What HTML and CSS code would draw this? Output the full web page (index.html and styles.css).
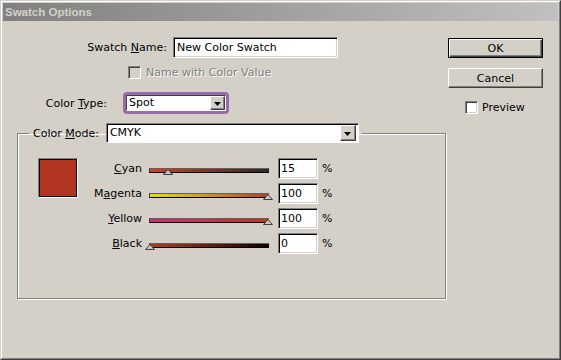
FILE: index.html
```html
<!DOCTYPE html>
<html>
<head>
<meta charset="utf-8">
<link rel="stylesheet" href="styles.css">
</head>
<body>
<div class="window">
  <div class="frame">
    <div class="titlebar">Swatch Options</div>
    <div class="content">
      <div class="form">
        <div class="row row-name">
          <label class="lbl lbl-name">Swatch <u>N</u>ame:</label>
          <div class="field name-field">New Color Swatch</div>
        </div>
        <div class="row row-check">
          <span class="check check-disabled"></span>
          <span class="disabled-text">Name with Color Value</span>
        </div>
        <div class="row row-type">
          <label class="lbl lbl-type">Color <u>T</u>ype:</label>
          <div class="focus-ring">
            <div class="select select-type">
              <span class="select-text">Spot</span>
              <span class="drop-btn"><svg width="7" height="4" viewBox="0 0 7 4"><polygon points="0,0 7,0 3.5,4" fill="#000"/></svg></span>
            </div>
          </div>
        </div>
        <fieldset class="group">
          <legend class="legend">
            <span class="legend-label">Color <u>M</u>ode:</span>
            <div class="select select-mode">
              <span class="select-text">CMYK</span>
              <span class="drop-btn"><svg width="7" height="4" viewBox="0 0 7 4"><polygon points="0,0 7,0 3.5,4" fill="#000"/></svg></span>
            </div>
          </legend>
          <div class="group-body">
            <div class="swatch"></div>
            <div class="sliders">
              <span class="slabel"><u>C</u>yan</span>
              <div class="slider"><div class="track track-cyan"></div><svg class="thumb" style="--v:15" width="10" height="6" viewBox="0 0 10 6"><polygon points="0.5,5.5 5,0.5 9.5,5.5" fill="#c8c8c8" stroke="#404040"/></svg></div>
              <div class="field num">15</div>
              <span class="pct">%</span>

              <span class="slabel">M<u>a</u>genta</span>
              <div class="slider"><div class="track track-magenta"></div><svg class="thumb" style="--v:100" width="10" height="6" viewBox="0 0 10 6"><polygon points="0.5,5.5 5,0.5 9.5,5.5" fill="#c8c8c8" stroke="#404040"/></svg></div>
              <div class="field num">100</div>
              <span class="pct">%</span>

              <span class="slabel"><u>Y</u>ellow</span>
              <div class="slider"><div class="track track-yellow"></div><svg class="thumb" style="--v:100" width="10" height="6" viewBox="0 0 10 6"><polygon points="0.5,5.5 5,0.5 9.5,5.5" fill="#c8c8c8" stroke="#404040"/></svg></div>
              <div class="field num">100</div>
              <span class="pct">%</span>

              <span class="slabel"><u>B</u>lack</span>
              <div class="slider"><div class="track track-black"></div><svg class="thumb" style="--v:0" width="10" height="6" viewBox="0 0 10 6"><polygon points="0.5,5.5 5,0.5 9.5,5.5" fill="#c8c8c8" stroke="#404040"/></svg></div>
              <div class="field num">0</div>
              <span class="pct">%</span>
            </div>
          </div>
        </fieldset>
      </div>
      <div class="actions">
        <div class="btn btn-default"><span>OK</span></div>
        <div class="btn"><span>Cancel</span></div>
        <div class="preview">
          <span class="check"></span>
          <span class="preview-label">Preview</span>
        </div>
      </div>
    </div>
  </div>
</div>
</body>
</html>
```
FILE: styles.css
```css
* { box-sizing: border-box; }
html, body { margin: 0; padding: 0; }
body {
  background: #d4d0c8;
  font-family: "DejaVu Sans", sans-serif;
  font-size: 11px;
  color: #000;
}
u { text-decoration: underline; text-underline-offset: 1px; }

.window {
  width: 561px;
  height: 360px;
  border: 1px solid;
  border-color: #d4d0c8 #404040 #404040 #d4d0c8;
  background: #d4d0c8;
}
.frame {
  height: 100%;
  border: 1px solid;
  border-color: #ffffff #808080 #808080 #ffffff;
  padding: 1px;
}
.titlebar {
  height: 18px;
  background: linear-gradient(to right, #808080, #c0c0c0);
  color: #d4d0c8;
  font-family: "Liberation Sans", Arial, sans-serif;
  font-weight: bold;
  font-size: 11.5px;
  line-height: 18px;
  padding-left: 2px;
}

.content {
  display: flex;
}
.form {
  width: 445px;
}
.row {
  display: flex;
  align-items: center;
}
.lbl { text-align: right; white-space: nowrap; }

.row-name { margin-top: 16px; height: 21px; }
.lbl-name { width: 164px; }
.name-field { margin-left: 6px; width: 165px; height: 21px; }

.field {
  background: #fff;
  border: 1px solid;
  border-color: #808080 #ffffff #ffffff #808080;
  box-shadow: inset 1px 1px 0 #000, inset -1px -1px 0 #d4d0c8;
  padding: 0 3px;
  line-height: 19px;
  white-space: nowrap;
}

.row-check { margin-top: 8px; height: 13px; padding-left: 125px; }
.check {
  width: 13px;
  height: 13px;
  background: #fff;
  border: 1px solid;
  border-color: #808080 #ffffff #ffffff #808080;
  box-shadow: inset 1px 1px 0 #404040, inset -1px -1px 0 #d4d0c8;
  flex: none;
}
.check-disabled { background: #d4d0c8; }
.disabled-text {
  margin-left: 5px;
  color: #808080;
  text-shadow: 1px 1px 0 #fff;
}

.row-type { margin-top: 13px; height: 22px; }
.lbl-type { width: 104px; }
.focus-ring {
  margin-left: 16px;
  width: 106px;
  height: 22px;
  border: 3px solid #9b6aa9;
  border-radius: 4px;
}
.select {
  display: flex;
  align-items: center;
  background: #fff;
  border: 1px solid;
  border-color: #404040 #ffffff #ffffff #404040;
}
.select-type { height: 16px; width: 100px; padding-right: 0; }
.select-text { flex: 1; padding-left: 2px; line-height: 14px; }
.drop-btn {
  width: 15px;
  height: 14px;
  background: #d4d0c8;
  border: 1px solid;
  border-color: #ffffff #404040 #404040 #ffffff;
  box-shadow: inset -1px -1px 0 #808080;
  display: flex;
  align-items: center;
  justify-content: center;
  flex: none;
}
.drop-btn svg { display: block; margin-top: 1px; }

.group {
  margin: 9px 0 0 14px;
  width: 429px;
  height: 176px;
  padding: 0 0 0 11px;
  border: 1px solid #808080;
  box-shadow: 1px 1px 0 #fff, inset 1px 1px 0 #fff;
  min-width: 0;
}
.legend {
  display: flex;
  align-items: center;
  padding: 0 3px 0 4px;
  height: 20px;
}
.legend-label { white-space: nowrap; }
.select-mode {
  margin-left: 7px;
  width: 253px;
  height: 20px;
  border-color: #808080 #ffffff #ffffff #808080;
  box-shadow: inset 1px 1px 0 #000;
  padding: 2px 2px 2px 0;
}
.select-mode .select-text { padding-left: 3px; }
.select-mode .drop-btn { width: 16px; height: 16px; }

.group-body {
  display: flex;
  align-items: flex-start;
  margin-top: 15px;
}
.swatch {
  margin-left: 9px;
  width: 40px;
  height: 40px;
  background: #b23422;
  border: 1px solid;
  border-color: #808080 #ffffff #ffffff #808080;
  box-shadow: inset 0 0 0 1px #000;
}
.sliders {
  display: grid;
  grid-template-columns: 64px 127px 49px auto;
  grid-auto-rows: 21px;
  row-gap: 4px;
  align-items: center;
}
.slabel { text-align: right; }
.slider {
  position: relative;
  height: 21px;
  margin-left: 7px;
  width: 120px;
}
.sliders .field.num { margin-left: 9px; width: 40px; height: 21px; padding-left: 2px; }
.pct { margin-left: 4px; }
.track {
  margin-top: 10px;
  height: 5px;
  border-bottom: 1px solid #000;
  border-left: 1px solid #404040;
  border-top: 1px solid #606060;
}
.track-cyan { background: linear-gradient(to right, #cc4422, #282828); }
.track-magenta { background: linear-gradient(to right, #e6e000, #d49a18 45%, #b83a22); }
.track-yellow { background: linear-gradient(to right, #c4307c, #b83a22); }
.track-black { background: linear-gradient(to right, #b83a22, #100000); }
.thumb {
  position: absolute;
  top: 11px;
  left: calc(var(--v) * 1.18px - 4px);
  display: block;
}

.actions {
  margin-top: 17px;
  width: 95px;
  display: flex;
  flex-direction: column;
}
.btn {
  height: 20px;
  width: 95px;
  background: #d4d0c8;
  border: 1px solid;
  border-color: #ffffff #404040 #404040 #ffffff;
  box-shadow: inset -1px -1px 0 #808080;
  display: flex;
  align-items: center;
  justify-content: center;
  margin-bottom: 10px;
}
.btn-default {
  border: 1px solid #000;
  box-shadow: inset 1px 1px 0 #fff, inset -1px -1px 0 #404040, inset -2px -2px 0 #808080;
}
.preview {
  display: flex;
  align-items: center;
  margin-top: 3px;
  padding-left: 17px;
}
.preview-label { margin-left: 4px; }
```
